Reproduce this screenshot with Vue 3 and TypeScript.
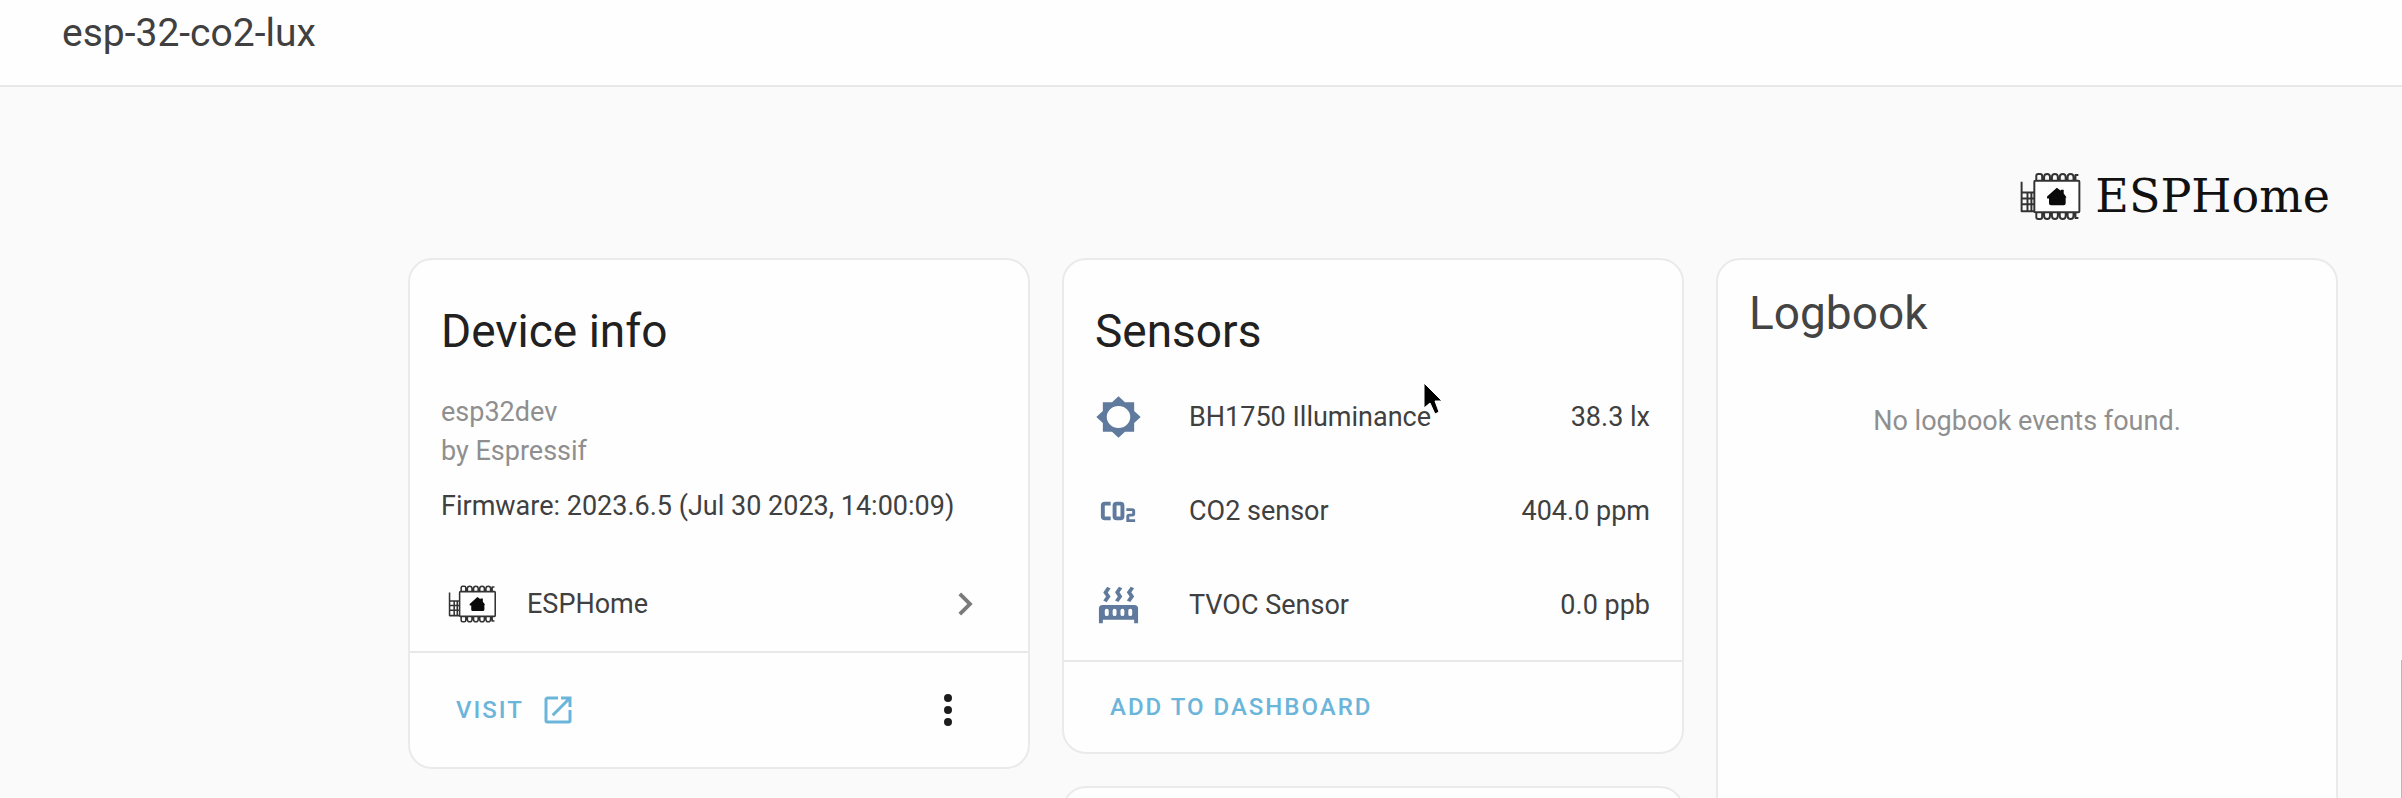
<script setup lang="ts">
interface Sensor {
  name: string
  value: string
  icon: string
}

const sensors: Sensor[] = [
  {
    name: 'BH1750 Illuminance',
    value: '38.3 lx',
    icon: 'M12,18A6,6 0 0,1 6,12A6,6 0 0,1 12,6A6,6 0 0,1 18,12A6,6 0 0,1 12,18M20,15.31L23.31,12L20,8.69V4H15.31L12,0.69L8.69,4H4V8.69L0.69,12L4,15.31V20H8.69L12,23.31L15.31,20H20V15.31Z',
  },
  {
    name: 'CO2 sensor',
    value: '404.0 ppm',
    icon: 'M5,7A2,2 0 0,0 3,9V15A2,2 0 0,0 5,17H8V15H5V9H8V7H5M11,7A2,2 0 0,0 9,9V15A2,2 0 0,0 11,17H13A2,2 0 0,0 15,15V9A2,2 0 0,0 13,7H11M11,9H13V15H11V9M16,10.5V12H19V13.5H17.5A1.5,1.5 0 0,0 16,15V18H20.5V16.5H17.5V15H19A1.5,1.5 0 0,0 20.5,13.5V12A1.5,1.5 0 0,0 19,10.5H16Z',
  },
  {
    name: 'TVOC Sensor',
    value: '0.0 ppb',
    icon: 'M7.95,3L6.53,5.19L7.95,7.4H7.94L5.95,10.5L4.22,9.6L5.64,7.39L4.22,5.19L6.22,2.09L7.95,3M13.95,2.89L12.53,5.1L13.95,7.3L13.94,7.31L11.95,10.4L10.22,9.5L11.64,7.3L10.22,5.1L12.22,2L13.95,2.89M20,2.89L18.56,5.1L20,7.3V7.31L18,10.4L16.25,9.5L17.67,7.3L16.25,5.1L18.25,2L20,2.89M2,22V14A2,2 0 0,1 4,12H20A2,2 0 0,1 22,14V22H20V20H4V22H2M6,14A1,1 0 0,0 5,15V17A1,1 0 0,0 6,18A1,1 0 0,0 7,17V15A1,1 0 0,0 6,14M10,14A1,1 0 0,0 9,15V17A1,1 0 0,0 10,18A1,1 0 0,0 11,17V15A1,1 0 0,0 10,14M14,14A1,1 0 0,0 13,15V17A1,1 0 0,0 14,18A1,1 0 0,0 15,17V15A1,1 0 0,0 14,14M18,14A1,1 0 0,0 17,15V17A1,1 0 0,0 18,18A1,1 0 0,0 19,17V15A1,1 0 0,0 18,14Z',
  },
]
</script>

<template>
  <div class="page">
    <svg class="defs" aria-hidden="true">
      <symbol id="esp-chip" viewBox="0 0 62 48">
        <g fill="none" stroke="#333" stroke-width="2" stroke-linejoin="round">
          <path d="M2 9V39H15M2 20H15M2 26H15M2 32H15M8 19V39M12 19V39" />
          <path
            d="M17 8V3Q17 1 19 1H21Q23 1 23 3V8M25 8V4Q25 1 28 1Q31 1 31 4V8M33 8V4Q33 1 36 1Q39 1 39 4V8M41 8V4Q41 1 44 1Q47 1 47 4V8M49 8V4Q49 1 52 1Q55 1 55 4V8M57 8V2H60"
          />
          <path
            d="M17 40V45Q17 47 19 47H21Q23 47 23 45V40M25 40V44Q25 47 28 47Q31 47 31 44V40M33 40V44Q33 47 36 47Q39 47 39 44V40M41 40V44Q41 47 44 47Q47 47 47 44V40M49 40V44Q49 47 52 47Q55 47 55 44V40M57 40V46H60"
          />
          <rect x="15" y="8" width="46" height="32" rx="1" fill="#fff" />
        </g>
        <path
          d="M38 15L42 18V17H45V21L48 25H47V31Q47 33 45 33H32Q30 33 30 31V26H28V24Z"
          fill="#0a0a0a"
        />
      </symbol>
    </svg>

    <header class="toolbar">
      <h1>esp-32-co2-lux</h1>
    </header>

    <main class="content">
      <div class="brand">
        <svg class="brand-chip" aria-hidden="true"><use href="#esp-chip" /></svg>
        <span>ESPHome</span>
      </div>

      <div class="columns">
        <div class="column">
          <section class="card">
            <h2>Device info</h2>
            <div class="details">
              <p class="muted">esp32dev</p>
              <p class="muted">by Espressif</p>
              <p class="firmware">Firmware: 2023.6.5 (Jul 30 2023, 14:00:09)</p>
            </div>
            <a class="integration" href="#integration">
              <svg class="integration-chip" aria-hidden="true"><use href="#esp-chip" /></svg>
              <span>ESPHome</span>
              <svg class="chevron" viewBox="0 0 24 24" aria-hidden="true">
                <path d="M8.59,16.58L13.17,12L8.59,7.41L10,6L16,12L10,18L8.59,16.58Z" />
              </svg>
            </a>
            <div class="actions tall">
              <a class="action" href="#visit">
                VISIT
                <svg class="open" viewBox="0 0 24 24" aria-hidden="true">
                  <path
                    d="M14,3V5H17.59L7.76,14.83L9.17,16.24L19,6.41V10H21V3M19,19H5V5H12V3H5C3.89,3 3,3.9 3,5V19A2,2 0 0,0 5,21H19A2,2 0 0,0 21,19V12H19V19Z"
                  />
                </svg>
              </a>
              <button class="menu" type="button" aria-label="Menu">
                <svg viewBox="0 0 24 24" aria-hidden="true">
                  <path
                    d="M12,16A2,2 0 0,1 14,18A2,2 0 0,1 12,20A2,2 0 0,1 10,18A2,2 0 0,1 12,16M12,10A2,2 0 0,1 14,12A2,2 0 0,1 12,14A2,2 0 0,1 10,12A2,2 0 0,1 12,10M12,4A2,2 0 0,1 14,6A2,2 0 0,1 12,8A2,2 0 0,1 10,6A2,2 0 0,1 12,4Z"
                  />
                </svg>
              </button>
            </div>
          </section>
        </div>

        <div class="column">
          <section class="card">
            <h2>Sensors</h2>
            <ul class="sensors">
              <li v-for="sensor in sensors" :key="sensor.name">
                <svg viewBox="0 0 24 24" preserveAspectRatio="none" aria-hidden="true">
                  <path :d="sensor.icon" />
                </svg>
                <span class="name">{{ sensor.name }}</span>
                <span>{{ sensor.value }}</span>
              </li>
            </ul>
            <div class="actions">
              <button class="action" type="button">ADD TO DASHBOARD</button>
            </div>
          </section>
          <section class="card next"></section>
        </div>

        <div class="column">
          <section class="card logbook">
            <h2>Logbook</h2>
            <p>No logbook events found.</p>
          </section>
        </div>
      </div>
    </main>

    <div class="scroll-edge"></div>
    <svg class="cursor" viewBox="0 0 20 34" aria-hidden="true">
      <path d="M1 1V26L7 21L12 32L16 30L12 19H19Z" fill="#000" stroke="#fff" />
    </svg>
  </div>
</template>

<style>
body {
  margin: 0;
  background: #fafafa;
}
</style>

<style scoped>
.page {
  position: relative;
  display: flex;
  flex-direction: column;
  height: 100vh;
  overflow: hidden;
  background: #fafafa;
  color: #404040;
  font-family: Roboto, sans-serif;
  font-size: 27px;
  line-height: 39px;
}

h1,
h2,
p,
ul {
  margin: 0;
  padding: 0;
  font-weight: 400;
}

svg {
  display: block;
  flex: none;
}

.defs {
  position: absolute;
  width: 0;
  height: 0;
}

.toolbar {
  flex: none;
  padding: 9px 62px 28px;
  border-bottom: 2px solid #e8e8e8;
  background: #fefefe;
}

.toolbar h1 {
  font-size: 39px;
  line-height: 48px;
}

.content {
  flex: 1;
  display: flex;
  flex-direction: column;
  padding: 80px 64px 0 408px;
}

.brand {
  display: flex;
  align-items: center;
  justify-content: flex-end;
  gap: 14px;
  padding-right: 8px;
  margin-bottom: 33px;
  color: #111;
  font-family: 'DejaVu Serif', serif;
  font-size: 46px;
  line-height: 58px;
}

.brand-chip {
  width: 62px;
  height: 47px;
}

.columns {
  flex: 1;
  display: grid;
  grid-template-columns: repeat(3, minmax(0, 1fr));
  gap: 32px;
}

.column {
  display: flex;
  flex-direction: column;
  gap: 32px;
}

.card {
  box-sizing: border-box;
  border: 2px solid #eaeaea;
  border-radius: 24px;
  background: #fefefe;
}

.card h2 {
  padding: 41px 31px 9px;
  color: #212121;
  font-size: 46px;
  line-height: 60px;
}

.details {
  padding: 23px 31px 0;
}

.muted {
  color: #8f8f8f;
}

.firmware {
  margin-top: 16px;
}

.integration {
  display: flex;
  align-items: center;
  gap: 31px;
  height: 94px;
  margin-top: 31px;
  padding: 0 40px 0 38px;
  color: inherit;
  text-decoration: none;
}

.integration-chip {
  width: 48px;
  height: 40px;
}

.chevron {
  width: 46px;
  height: 46px;
  margin-left: auto;
  fill: #7a7a7a;
}

.actions {
  display: flex;
  align-items: center;
  justify-content: space-between;
  height: 90px;
  padding: 0 56px 0 46px;
  border-top: 2px solid #e8e8e8;
}

.actions.tall {
  height: 114px;
}

.action {
  display: flex;
  align-items: center;
  gap: 16px;
  padding: 0;
  border: 0;
  background: none;
  color: #6bb5da;
  font: 500 24px/32px Roboto, sans-serif;
  letter-spacing: 2px;
  text-decoration: none;
}

.open {
  width: 36px;
  height: 36px;
  fill: currentColor;
}

.menu {
  padding: 0;
  border: 0;
  background: none;
}

.menu svg {
  width: 48px;
  height: 48px;
  fill: #1c1c1c;
}

.sensors {
  list-style: none;
  padding: 0 32px 8px 31px;
}

.sensors li {
  display: flex;
  align-items: center;
  gap: 47px;
  height: 94px;
}

.sensors svg {
  width: 47px;
  height: 44px;
  fill: #5f7a9c;
}

.name {
  flex: 1;
}

.next {
  height: 200px;
}

.logbook {
  flex: 1;
  min-height: 560px;
}

.logbook h2 {
  padding: 23px 31px 50px;
  color: #444;
}

.logbook p {
  padding-top: 9px;
  color: #8f8f8f;
  text-align: center;
}

.scroll-edge {
  position: absolute;
  top: 660px;
  right: 0;
  bottom: 0;
  width: 1px;
  background: #b8b8b8;
}

.cursor {
  position: absolute;
  top: 382px;
  left: 1423px;
  width: 20px;
  height: 34px;
}
</style>
